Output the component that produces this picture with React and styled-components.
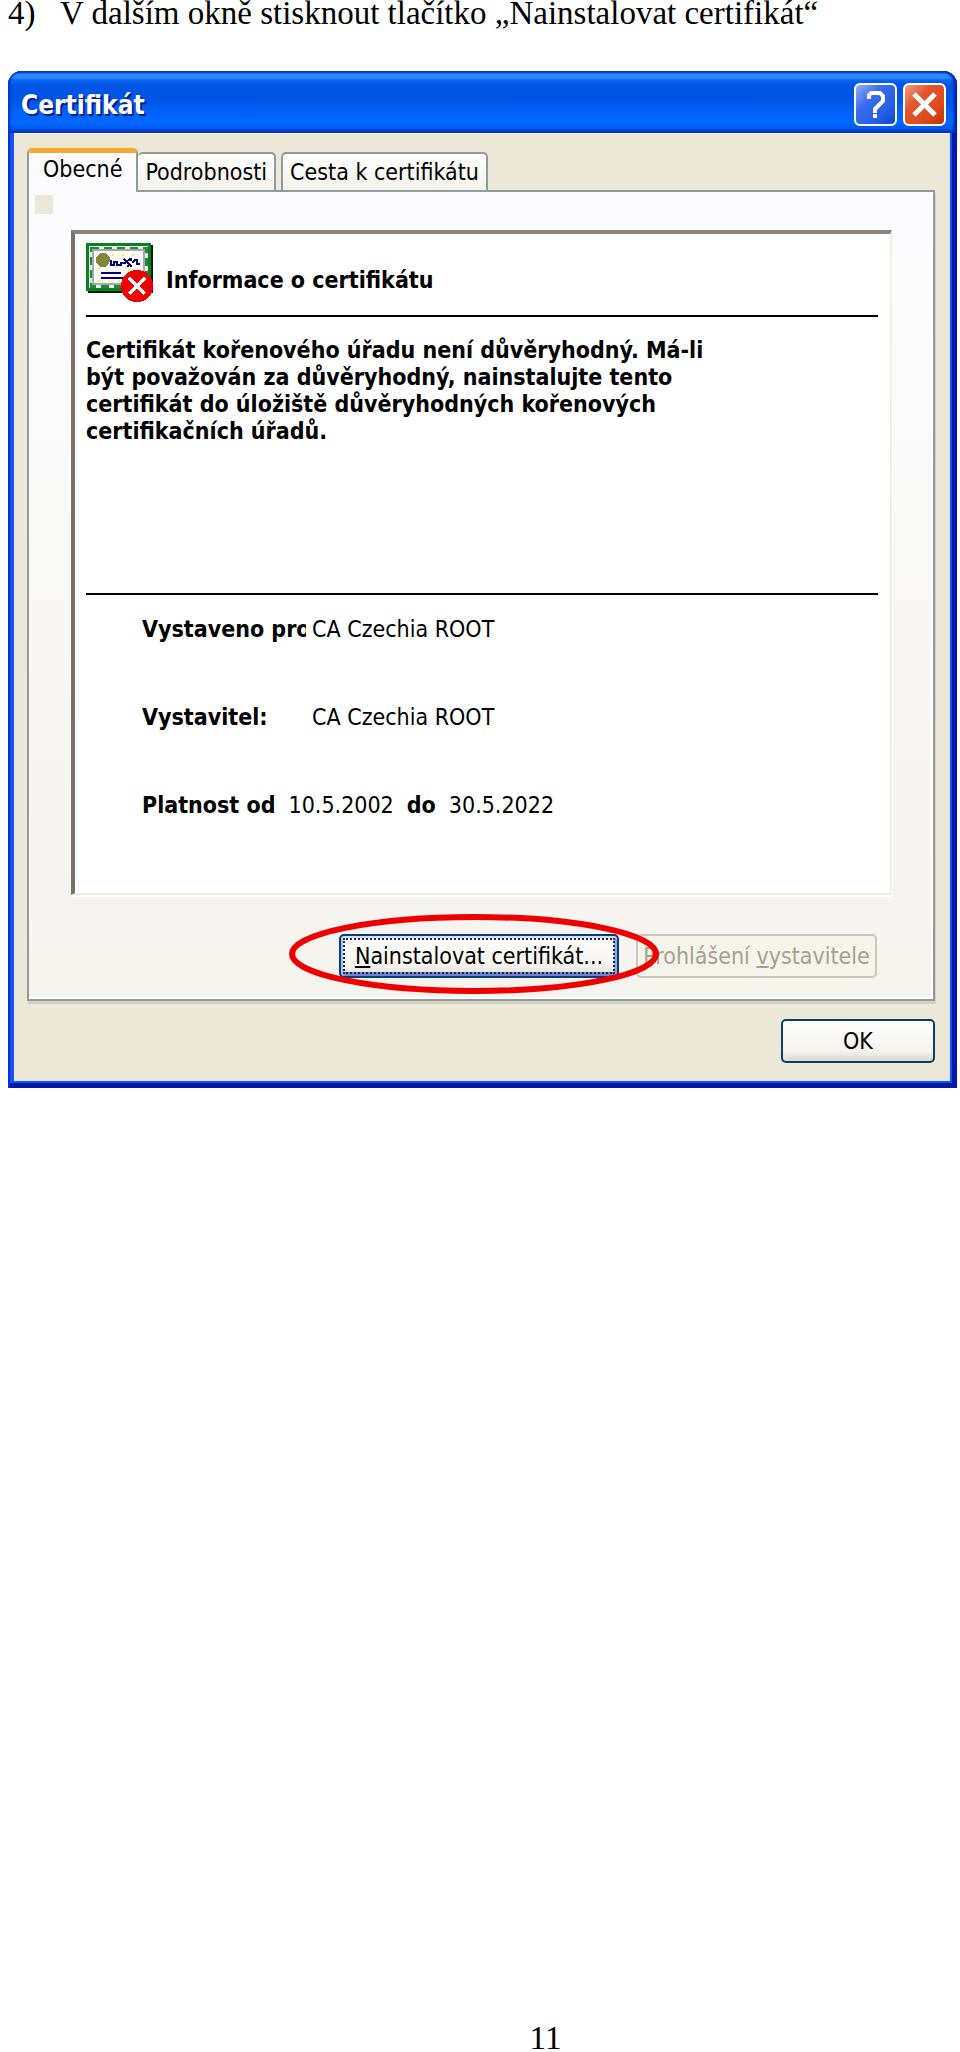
import React, { useState } from "react";
import styled, { createGlobalStyle } from "styled-components";

const GlobalStyle = createGlobalStyle`
  * {
    box-sizing: border-box;
  }
  body {
    margin: 0;
    background: #ffffff;
  }
`;

const uiFont = `"DejaVu Sans Condensed", "DejaVu Sans", Tahoma, sans-serif`;

const Page = styled.main`
  display: flex;
  flex-direction: column;
  min-height: 100vh;
  padding: 0 3px 0 8px;
  color: #000000;
  font-family: "Liberation Serif", "Times New Roman", serif;
  font-size: 33px;
  line-height: 27px;
`;

const Step = styled.h1`
  display: grid;
  grid-template-columns: 52px 1fr;
  margin: 0 0 44px;
  font-size: 33px;
  font-weight: 400;
`;

const PageNumber = styled.footer`
  margin-top: auto;
  padding-left: 126px;
  text-align: center;
`;

const Dialog = styled.section`
  padding: 0 7px 7px 6px;
  border-radius: 14px 14px 0 0;
  background: #1552ee;
  box-shadow: inset 2px 0 #0a2fd0, inset -5px 0 #0018a4, inset 0 -5px #0018a4;
  font-family: ${uiFont};
  font-size: 23px;
  line-height: 27px;
`;

const TitleBar = styled.header`
  display: flex;
  align-items: center;
  gap: 6px;
  height: 62px;
  margin: 0 -7px 0 -6px;
  padding: 4px 11px 0 13px;
  border-radius: 14px 14px 0 0;
  background: linear-gradient(
    #0842c4 0px,
    #0d55d8 2px,
    #2a90ff 3px,
    #2a88fc 7px,
    #0a66f2 9px,
    #0055e5 14px,
    #0054e3 28px,
    #0062fa 42px,
    #0068ff 52px,
    #005af0 57px,
    #0038c0 61px
  );
  box-shadow: inset 2px 0 2px #0a34cc, inset -3px 0 3px #0020b0;
`;

const Title = styled.h2`
  flex: 1;
  margin: 0;
  padding-top: 3px;
  color: #ffffff;
  font-size: 26px;
  font-weight: 700;
  text-shadow: 2px 2px #0a1f8c;
`;

const CaptionButton = styled.button`
  width: 43px;
  height: 43px;
  padding: 0;
  border: 2px solid #ffffff;
  border-radius: 6px;
  background: ${(props) =>
    props.$danger
      ? "linear-gradient(135deg, #f0a080, #e2552c 35%, #e04a1c 70%, #c03404)"
      : "linear-gradient(135deg, #8fb0ff, #3c6cec 35%, #2460ea 70%, #1048c4)"};

  svg {
    display: block;
  }
`;

const Client = styled.div`
  padding: 14px 14px 16px 13px;
  border-top: 1px solid #ffffff;
  border-right: 1px solid #dfe8ff;
  border-bottom: 2px solid #dfe8ff;
  background: #ebe8d7;
`;

const TabList = styled.div`
  display: flex;
  align-items: flex-end;
`;

const Tab = styled.button`
  position: relative;
  height: ${(props) => (props.$active ? "44px" : "38px")};
  margin: ${(props) => (props.$active ? "0 0 -2px" : "0 5px 0 0")};
  padding: ${(props) => (props.$active ? "0 14px 6px" : "0 7px")};
  z-index: ${(props) => (props.$active ? 1 : 0)};
  border: 2px solid #919b9c;
  border-left-width: ${(props) => (props.$joined ? "0" : "2px")};
  border-top: ${(props) => (props.$active ? "5px solid #f5a92f" : "2px solid #919b9c")};
  border-bottom: 0;
  border-radius: 5px 5px 0 0;
  background: ${(props) => (props.$active ? "#fcfcfe" : "linear-gradient(#ffffff, #f2f1ea)")};
  color: #000000;
  font-family: inherit;
  font-size: 23px;
  line-height: 27px;
`;

const TabPanel = styled.div`
  padding: 3px 41px 21px 42px;
  border: 2px solid #919b9c;
  background: linear-gradient(#fcfcfe, #f4f3ee);
  box-shadow: inset -2px -2px #ffffff, 1px 3px #d2d1c2;
`;

const Patch = styled.div`
  width: 18px;
  height: 19px;
  margin: 0 0 16px -36px;
  background: #ebe8d7;
`;

const Certificate = styled.div`
  padding: 9px 12px 74px 11px;
  border: 4px solid #77736a;
  border-right: 2px solid #f1efe2;
  border-bottom: 2px solid #f1efe2;
  border-top-color: #8a867c;
  background: #ffffff;
  box-shadow: 1px 2px #ffffff;
`;

const CertHeader = styled.div`
  display: flex;
  align-items: center;
  gap: 12px;
  padding-bottom: 12px;
  border-bottom: 2px solid #000000;

  svg {
    display: block;
  }
`;

const CertTitle = styled.h3`
  margin: 0;
  padding-top: 14px;
  font-size: 23px;
  font-weight: 700;
`;

const Warning = styled.p`
  min-height: 276px;
  margin: 0;
  padding: 20px 100px 0 0;
  font-weight: 700;
`;

const Details = styled.dl`
  display: flex;
  flex-direction: column;
  gap: 61px;
  margin: 0;
  padding: 21px 0 0 56px;
  border-top: 2px solid #000000;
`;

const Detail = styled.div`
  display: flex;
  gap: ${(props) => (props.$wide ? "6px" : "13px")};

  dt {
    flex: none;
    width: ${(props) => (props.$wide ? "164px" : "auto")};
    overflow: hidden;
    font-weight: 700;
    white-space: nowrap;
  }
  dd {
    margin: 0;
  }
`;

const Actions = styled.div`
  display: flex;
  justify-content: flex-end;
  gap: 17px;
  padding: 39px 15px 0 0;
`;

const Highlighted = styled.div`
  position: relative;
`;

const Ring = styled.svg`
  position: absolute;
  z-index: 1;
  top: -20px;
  left: -50px;
  overflow: visible;
  pointer-events: none;
`;

const Button = styled.button`
  width: ${(props) => props.$width};
  height: 44px;
  padding: 0;
  border: 2px solid #0c3b74;
  border-radius: 5px;
  background: linear-gradient(#ffffff, #f4f3ee 75%, #dcd8cc);
  color: #000000;
  font-family: inherit;
  font-size: 23px;
  line-height: 27px;
  white-space: nowrap;

  &:disabled {
    border-color: #cbc8bb;
    background: #f5f4ea;
    color: #a3a192;
  }
`;

const DefaultButton = styled(Button)`
  box-shadow: inset 0 2px #cfe0fc, inset 2px 0 #aac4f2, inset -3px 0 #88a8e6,
    inset 0 -4px #6c86d2;
  outline: 2px dotted #26264a;
  outline-offset: -6px;
`;

const DialogFooter = styled.div`
  display: flex;
  justify-content: flex-end;
  padding-top: 18px;
`;

const tabs = [
  { label: "Obecné" },
  { label: "Podrobnosti", joined: true },
  { label: "Cesta k certifikátu" },
];

function HelpIcon() {
  return (
    <svg width="39" height="39" fill="none" stroke="#ffffff" strokeWidth="4">
      <path d="M13 14v-4l2-2h9l3 3v5l-4 4-4 4v4" />
      <path d="M17 31h4" />
    </svg>
  );
}

function CloseIcon() {
  return (
    <svg width="39" height="39" fill="none" stroke="#ffffff" strokeWidth="5">
      <path d="M9 9l21 21M30 9L9 30" />
    </svg>
  );
}

function CertificateIcon() {
  return (
    <svg width="68" height="60" fill="none" shapeRendering="crispEdges">
      <rect x="2" y="2" width="65" height="48" fill="#002000" />
      <rect width="65" height="48" fill="#0c7f24" />
      <rect x="3" y="3" width="59" height="42" fill="#e4f4e4" />
      <rect x="5" y="5" width="55" height="38" stroke="#1e8a3a" strokeWidth="3" strokeDasharray="8 5" />
      <rect x="7" y="7" width="51" height="34" fill="#ffffff" stroke="#a8a8a8" strokeWidth="2" />
      <path
        d="M26 12h28M12 25h10M42 28h12M12 38h26"
        stroke="#fff04a"
        strokeWidth="2"
        strokeDasharray="2 8"
      />
      <circle cx="17" cy="17" r="7" fill="#85853a" />
      <path
        d="M25 17v5h3v-3h3v3h4v-2h4l5-4M38 16l8 8M41 24l3-3M45 18v-3M46 20l3-3h2v4h3"
        stroke="#000080"
        strokeWidth="2"
      />
      <path d="M15 30h20M15 35h22" stroke="#000080" strokeWidth="2" />
      <circle cx="51" cy="43" r="16" fill="#f00000" />
      <path d="M43 35l16 16M59 35L43 51" stroke="#ffffff" strokeWidth="4" />
    </svg>
  );
}

function App() {
  const [active, setActive] = useState(0);

  return (
    <>
      <GlobalStyle />
      <Page>
        <Step>
          <span>4)</span>
          <span>V dalším okně stisknout tlačítko „Nainstalovat certifikát“</span>
        </Step>
        <Dialog>
          <TitleBar>
            <Title>Certifikát</Title>
            <CaptionButton type="button">
              <HelpIcon />
            </CaptionButton>
            <CaptionButton type="button" $danger>
              <CloseIcon />
            </CaptionButton>
          </TitleBar>
          <Client>
            <TabList role="tablist">
              {tabs.map((tab, index) => (
                <Tab
                  key={tab.label}
                  type="button"
                  role="tab"
                  aria-selected={index === active}
                  $active={index === active}
                  $joined={tab.joined}
                  onClick={() => setActive(index)}
                >
                  {tab.label}
                </Tab>
              ))}
            </TabList>
            <TabPanel role="tabpanel">
              <Patch />
              <Certificate>
                <CertHeader>
                  <CertificateIcon />
                  <CertTitle>Informace o certifikátu</CertTitle>
                </CertHeader>
                <Warning>
                  Certifikát kořenového úřadu není důvěryhodný. Má-li
                  <br />
                  být považován za důvěryhodný, nainstalujte tento
                  <br />
                  certifikát do úložiště důvěryhodných kořenových
                  <br />
                  certifikačních úřadů.
                </Warning>
                <Details>
                  <Detail $wide>
                    <dt>Vystaveno pro:</dt>
                    <dd>CA Czechia ROOT</dd>
                  </Detail>
                  <Detail $wide>
                    <dt>Vystavitel:</dt>
                    <dd>CA Czechia ROOT</dd>
                  </Detail>
                  <Detail>
                    <dt>Platnost od</dt>
                    <dd>10.5.2002</dd>
                    <dt>do</dt>
                    <dd>30.5.2022</dd>
                  </Detail>
                </Details>
              </Certificate>
              <Actions>
                <Highlighted>
                  <DefaultButton type="button" $width="280px">
                    <u>N</u>ainstalovat certifikát...
                  </DefaultButton>
                  <Ring width="370" height="80" fill="none">
                    <ellipse cx="185" cy="40" rx="182" ry="37" stroke="#ee0000" strokeWidth="6" />
                  </Ring>
                </Highlighted>
                <Button type="button" $width="241px" disabled>
                  Prohlášení <u>v</u>ystavitele
                </Button>
              </Actions>
            </TabPanel>
            <DialogFooter>
              <Button type="button" $width="154px">
                OK
              </Button>
            </DialogFooter>
          </Client>
        </Dialog>
        <PageNumber>11</PageNumber>
      </Page>
    </>
  );
}

export default App;
